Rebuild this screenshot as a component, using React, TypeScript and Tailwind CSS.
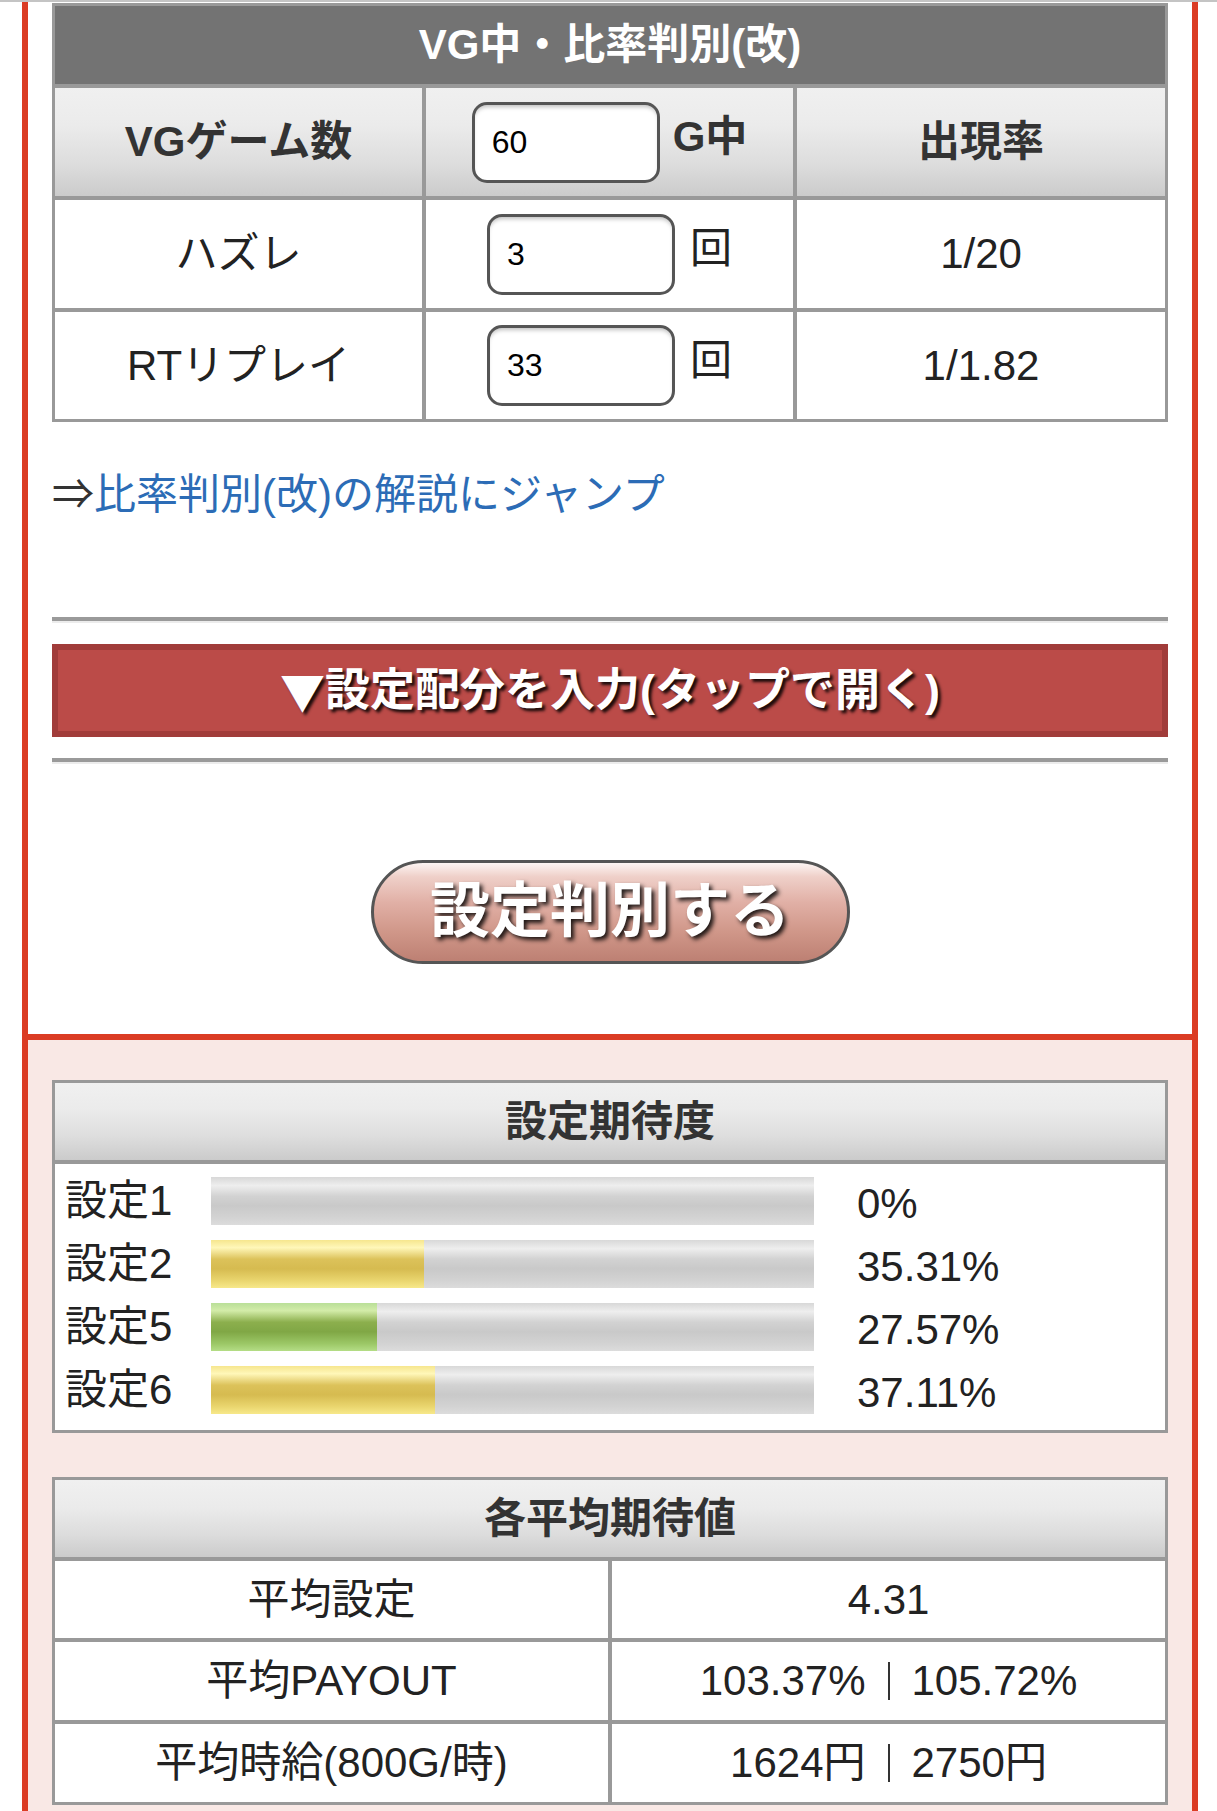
import React from "react";

const FONT = "font-['Liberation_Sans','Noto_Sans_CJK_JP',sans-serif]";
const HEAD_GRAD =
  "bg-[linear-gradient(to_bottom,#f0f0f0_0%,#ebebeb_35%,#dddddd_70%,#cbcbcb_100%)]";

function Input({ value }: { value: string }) {
  return (
    <input
      type="text"
      defaultValue={value}
      readOnly
      className="w-[188px] h-[81px] border-[3px] border-[#555] rounded-[15px] bg-white pl-[17px] text-[32px] text-black outline-none shadow-[inset_0_4px_4px_-2px_rgba(0,0,0,0.25)] font-['Liberation_Sans',sans-serif]"
    />
  );
}

const GRAY_BAR =
  "bg-[linear-gradient(to_bottom,#d8d8d8_0%,#eeeeee_18%,#d2d2d2_40%,#c9c9c9_60%,#d3d3d3_85%,#dcdcdc_100%)]";
const YELLOW_BAR =
  "bg-[linear-gradient(to_bottom,#f6e68e_0%,#fff7b9_16%,#dcc25a_40%,#d6bb50_60%,#ead66f_85%,#f7e88a_100%)]";
const GREEN_BAR =
  "bg-[linear-gradient(to_bottom,#b9df98_0%,#d3eca9_16%,#8caf4d_40%,#80a745_60%,#9cc867_85%,#b4dd86_100%)]";

const bars = [
  { label: "設定1", pct: 0, text: "0%", color: YELLOW_BAR },
  { label: "設定2", pct: 35.31, text: "35.31%", color: YELLOW_BAR },
  { label: "設定5", pct: 27.57, text: "27.57%", color: GREEN_BAR },
  { label: "設定6", pct: 37.11, text: "37.11%", color: YELLOW_BAR },
];

export default function App() {
  return (
    <div className={`${FONT} bg-white w-[1217px] min-h-[1811px] text-[#222]`}>
      <div className="h-[2px] bg-[#c4c4c4]" />
      <div className="ml-[22px] w-[1176px] border-x-[6px] border-[#db3c24]">
        {/* top white section */}
        <section className="bg-white px-[24px] pt-[1px] pb-[70px]">
          <div className="border-[3px] border-[#999]">
            <div className="h-[82px] bg-[#737373] border-b-[4px] border-[#999] flex items-center justify-center text-white font-bold text-[42px] leading-none">
              VG中・比率判別(改)
            </div>
            <div className={`grid grid-cols-[367px_371px_1fr] h-[112px] border-b-[4px] border-[#999] ${HEAD_GRAD}`}>
              <div className="flex items-center justify-center font-bold text-[42px] leading-none text-[#333]">
                VGゲーム数
              </div>
              <div className="border-l-[4px] border-[#999] flex items-center justify-center gap-[13px]">
                <Input value="60" />
                <span className="font-bold text-[42px] leading-none text-[#333] pb-[10px]">G中</span>
              </div>
              <div className="border-l-[4px] border-[#999] flex items-center justify-center font-bold text-[42px] leading-none text-[#333]">
                出現率
              </div>
            </div>
            {[
              { name: "ハズレ", v: "3", r: "1/20" },
              { name: "RTリプレイ", v: "33", r: "1/1.82" },
            ].map((row, i) => (
              <div
                key={row.name}
                className={`grid grid-cols-[367px_371px_1fr] bg-white ${
                  i === 0 ? "h-[112px] border-b-[4px] border-[#999]" : "h-[107px]"
                }`}
              >
                <div className="flex items-center justify-center text-[42px] leading-none">{row.name}</div>
                <div className="border-l-[4px] border-[#999] flex items-center justify-center gap-[15px]">
                  <Input value={row.v} />
                  <span className="text-[42px] leading-none pb-[10px]">回</span>
                </div>
                <div className="border-l-[4px] border-[#999] flex items-center justify-center text-[42px] leading-none">
                  {row.r}
                </div>
              </div>
            ))}
          </div>

          <div className="mt-[49px] h-[48px] flex items-center text-[42px] leading-none">
            <span className="text-[#333]">⇒</span>
            <span className="text-[#2c6cb6]">比率判別(改)の解説にジャンプ</span>
          </div>

          <div className="mt-[98px] border-t-[4px] border-b-[2px] border-t-[#9a9a9a] border-b-[#ececec]" />

          <div className="mt-[21px] h-[93px] border-[6px] border-[#a13c3a] bg-[#bb4b48] flex items-center justify-center text-white font-bold text-[45px] leading-none [text-shadow:3px_3px_3px_rgba(0,0,0,0.85)]">
            <span className="font-['Noto_Sans_CJK_JP',sans-serif]">▼</span>
            設定配分を入力(タップで開く)
          </div>

          <div className="mt-[21px] border-t-[4px] border-b-[2px] border-t-[#9a9a9a] border-b-[#ececec]" />

          <div className="mt-[96px] flex justify-center">
            <button
              type="button"
              className="w-[479px] h-[104px] rounded-full border-[3px] border-[#555] bg-[linear-gradient(to_bottom,#fdf5f3_0%,#efd0c9_14%,#e1b0a6_40%,#d09789_70%,#bd8073_100%)] flex items-center justify-center text-white font-bold text-[60px] leading-none [text-shadow:3px_3px_4px_rgba(0,0,0,0.85)]"
            >
              設定判別する
            </button>
          </div>
        </section>

        <div className="h-[6px] bg-[#db3c24]" />

        {/* pink section */}
        <section className="bg-[#f9e8e5] px-[24px] pt-[40px] pb-[20px]">
          <div className="border-[3px] border-[#999] bg-white">
            <div className={`h-[81px] border-b-[4px] border-[#999] flex items-center justify-center font-bold text-[42px] leading-none text-[#333] ${HEAD_GRAD}`}>
              設定期待度
            </div>
            <div className="pt-[13px] pb-[16px] flex flex-col gap-[15px]">
              {bars.map((b) => (
                <div key={b.label} className="flex items-center h-[48px]">
                  <div className="w-[156px] pl-[10px] text-[42px] leading-none">{b.label}</div>
                  <div className={`relative w-[603px] h-[48px] ${GRAY_BAR}`}>
                    <div className={`h-full ${b.color}`} style={{ width: `${b.pct}%` }} />
                  </div>
                  <div className="ml-[43px] pt-[6px] text-[42px] leading-none">{b.text}</div>
                </div>
              ))}
            </div>
          </div>

          <div className="mt-[44px] border-[3px] border-[#999] bg-white">
            <div className={`h-[81px] border-b-[4px] border-[#999] flex items-center justify-center font-bold text-[42px] leading-none text-[#333] ${HEAD_GRAD}`}>
              各平均期待値
            </div>
            {[
              { k: "平均設定", v: <>4.31</>, h: "h-[81px] border-b-[4px] border-[#999]" },
              {
                k: "平均PAYOUT",
                v: (
                  <>
                    103.37%<span className="inline-block w-[2px] h-[38px] bg-[#333] mx-[22px]" />105.72%
                  </>
                ),
                h: "h-[82px] border-b-[4px] border-[#999]",
              },
              {
                k: "平均時給(800G/時)",
                v: (
                  <>
                    1624円<span className="inline-block w-[2px] h-[38px] bg-[#333] mx-[22px]" />2750円
                  </>
                ),
                h: "h-[78px]",
              },
            ].map((r) => (
              <div key={r.k} className={`grid grid-cols-[553px_1fr] ${r.h}`}>
                <div className="flex items-center justify-center text-[42px] leading-none">{r.k}</div>
                <div className="border-l-[4px] border-[#999] flex items-center justify-center text-[42px] leading-none">
                  {r.v}
                </div>
              </div>
            ))}
          </div>
        </section>
      </div>
    </div>
  );
}
